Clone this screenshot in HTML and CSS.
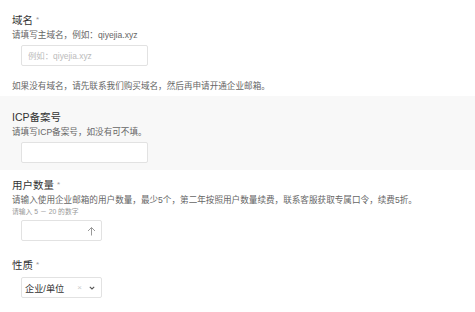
FILE: index.html
```html
<!DOCTYPE HTML>
<html>
  <head>
  <meta charset="UTF-8">
  <title>开通企业邮箱</title>
  <link rel="stylesheet" href="styles.css">
  </head>

  <body>
    <div class="field first">
      <div class="label">域名 <span class="req">*</span></div>
      <div class="help">请填写主域名，例如：qiyejia.xyz</div>
      <input class="box wide" type="text" placeholder="例如：qiyejia.xyz">
      <div class="note">如果没有域名，请先联系我们购买域名，然后再申请开通企业邮箱。</div>
    </div>

    <div class="field alt">
      <div class="label">ICP备案号</div>
      <div class="help">请填写ICP备案号，如没有可不填。</div>
      <input class="box wide" type="text">
    </div>

    <div class="field count">
      <div class="label">用户数量 <span class="req">*</span></div>
      <div class="help">请输入使用企业邮箱的用户数量，最少5个，第二年按照用户数量续费，联系客服获取专属口令，续费5折。</div>
      <div class="hint">请输入 5 － 20 的数字</div>
      <div class="box narrow num">
        <input type="text">
        <svg width="9" height="10" viewBox="0 0 9 10"><path d="M4.5 1.5 V9.5 M1 5 L4.5 1.5 L8 5" fill="none" stroke="#999" stroke-width="1"/></svg>
      </div>

      <div class="label kind">性质 <span class="req">*</span></div>
      <div class="box narrow sel">
        <span class="val">企业/单位</span>
        <span class="clear">×</span>
        <svg width="6" height="4" viewBox="0 0 6 4"><path d="M0.8 0.8 L3 3 L5.2 0.8" fill="none" stroke="#555" stroke-width="1.1"/></svg>
      </div>
    </div>
  </body>
</html>
```

FILE: styles.css
```css
body {
  margin: 0;
  background: #fff;
  font-family: "Liberation Sans", "Noto Sans CJK SC", sans-serif;
  color: #333;
}
.field { padding: 14px 12px 7px 12px; }
.field.first { padding-top: 13px; padding-bottom: 4px; }
.field.alt { background: #f8f8f8; }
.field.count { padding-top: 8px; }
.label { font-size: 10.5px; line-height: 14px; color: #333; }
.req { color: #999; font-size: 8px; vertical-align: top; }
.help { font-size: 8.6px; line-height: 12px; color: #666; margin-top: 2px; }
.hint { font-size: 6.8px; line-height: 10px; color: #999; margin-top: 1px; }
.note { font-size: 8.6px; line-height: 12px; color: #666; margin-top: 14px; }

.box {
  display: block;
  box-sizing: border-box;
  height: 21px;
  margin: 4px 0 0 9px;
  border: 1px solid #e2e2e2;
  border-radius: 2px;
  background: #fff;
  font-family: inherit;
  font-size: 8.4px;
  padding: 0 6px;
  outline: none;
}
.box::placeholder { color: #bbb; }
.wide { width: 127px; }
.narrow { width: 81px; }

.num { display: flex; align-items: center; margin-top: 3px; padding-right: 5px; }
.num input { border: none; outline: none; flex: 1; min-width: 0; background: none; }

.kind { margin-top: 17px; }
.sel { display: flex; align-items: center; margin-top: 5px; padding: 0 6px 0 3px; }
.sel .val { font-size: 9.2px; color: #333; flex: 1; }
.sel .clear { font-size: 8px; color: #ccc; margin-right: 7px; }
```
